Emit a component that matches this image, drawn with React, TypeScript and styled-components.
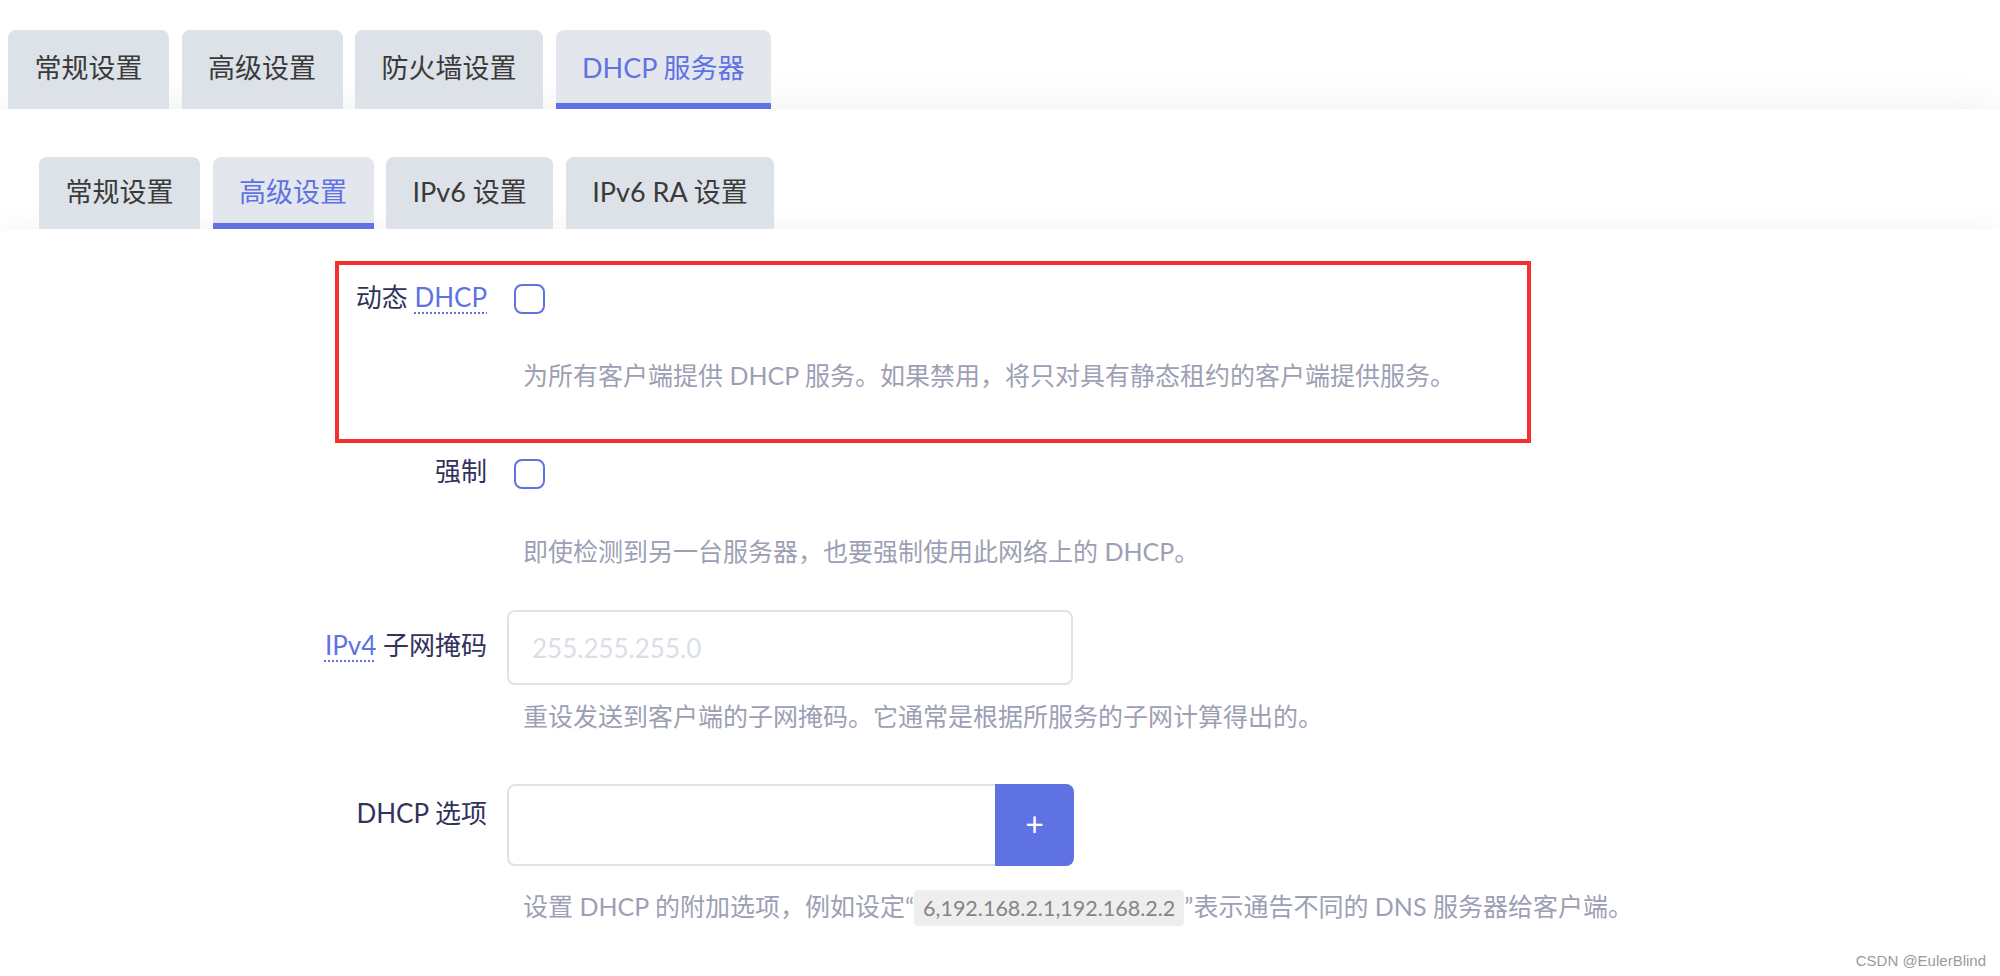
import React from "react";
import styled, { createGlobalStyle, css } from "styled-components";

const GlobalStyle = createGlobalStyle`
  html, body {
    margin: 0;
    padding: 0;
    background: #fff;
    overflow: hidden;
  }
  body {
    font-family: "Lato", "Noto Sans CJK SC", sans-serif;
  }
`;

const Page = styled.div`
  position: relative;
  width: 2000px;
  height: 976px;
  overflow: hidden;
  background: #fff;
`;

const TabBar = styled.ul<{ $top: number; $left: number }>`
  position: relative;
  z-index: 1;
  display: flex;
  gap: 12.5px;
  margin: 0;
  padding: ${(p) => p.$top}px 0 0 ${(p) => p.$left}px;
  list-style: none;
`;

const Tab = styled.li<{ $active?: boolean; $height: number }>`
  box-sizing: border-box;
  display: flex;
  align-items: center;
  height: ${(p) => p.$height}px;
  padding: 0 26.5px;
  border-radius: 8px 8px 0 0;
  border-bottom: 6px solid ${(p) => (p.$active ? "#5e72e4" : "transparent")};
  background: ${(p) => (p.$active ? "#e3e7ed" : "#dde2e8")};
  color: ${(p) => (p.$active ? "#5e72e4" : "#3a3a3a")};
  font-size: 27px;
  white-space: nowrap;
`;

// outer panel under the first tab strip, its shadow makes the grey fade above
const OuterCard = styled.section`
  background: #fff;
  box-shadow: 0 0 40px rgba(0, 0, 0, 0.07);
  min-height: 867px;
`;

const InnerCard = styled.div`
  background: #fff;
  border-radius: 8px 0 0 0;
  box-shadow: 0 0 30px rgba(0, 0, 0, 0.06);
  padding: 55px 0 60px;
  min-height: 700px;
`;

const Row = styled.div<{ $after: number; $highlight?: boolean }>`
  position: relative;
  display: grid;
  grid-template-columns: 487px 1fr;
  column-gap: 20px;
  margin-bottom: ${(p) => p.$after}px;

  ${(p) =>
    p.$highlight &&
    css`
      &::before {
        content: "";
        position: absolute;
        left: 335px;
        top: -23px;
        width: 1196px;
        height: 182px;
        box-sizing: border-box;
        border: 4px solid #f3302b;
        pointer-events: none;
      }
    `}
`;

const Label = styled.label<{ $offset: number }>`
  margin-top: ${(p) => p.$offset}px;
  text-align: right;
  font-size: 26px;
  line-height: 26px;
  color: #32325d;
  white-space: nowrap;
`;

const Abbr = styled.abbr`
  color: #5e72e4;
  text-decoration: underline dotted #5e72e4;
  text-decoration-thickness: 2px;
  text-underline-offset: 5px;
  cursor: help;
`;

const Field = styled.div`
  display: flex;
  flex-direction: column;
  align-items: flex-start;
`;

const Checkbox = styled.input.attrs({ type: "checkbox" })`
  appearance: none;
  display: block;
  box-sizing: border-box;
  width: 31px;
  height: 30px;
  margin: 0 0 0 7px;
  border: 2px solid #5e72e4;
  border-radius: 8px;
  background: #fff;
`;

const TextInput = styled.input`
  box-sizing: border-box;
  width: 566px;
  height: 75px;
  padding: 0 23px;
  border: 2px solid #dfe3e9;
  border-radius: 8px;
  outline: none;
  font-family: "Lato", "Noto Sans CJK SC", sans-serif;
  font-size: 26px;
  color: #32325d;

  &::placeholder {
    color: #dbdee6;
  }
`;

const InputGroup = styled.div`
  display: flex;
  width: 567px;
  height: 82px;
`;

const GroupInput = styled.input`
  flex: 1;
  box-sizing: border-box;
  min-width: 0;
  border: 2px solid #dfe3e9;
  border-right: none;
  border-radius: 8px 0 0 8px;
  outline: none;
  padding: 0 23px;
  font-family: "Lato", "Noto Sans CJK SC", sans-serif;
  font-size: 26px;
`;

const AddButton = styled.button`
  width: 79px;
  border: none;
  border-radius: 0 8px 8px 0;
  background: #5e72e4;
  color: #fff;
  font-family: "Lato", sans-serif;
  font-size: 32px;
  line-height: 1;
  padding: 0 0 3px;
  cursor: pointer;
`;

const Help = styled.div<{ $top: number }>`
  margin-top: ${(p) => p.$top}px;
  padding-left: 16px;
  font-size: 25px;
  line-height: 30px;
  color: #9d9fb4;
  white-space: nowrap;
`;

const Code = styled.code`
  padding: 5px 9px;
  border-radius: 4px;
  background: #eeeeee;
  color: #858585;
  font-family: "Lato", "Noto Sans CJK SC", sans-serif;
  font-size: 21.5px;
`;

const Watermark = styled.div`
  position: absolute;
  right: 14px;
  top: 952px;
  font-family: "Liberation Sans", Arial, sans-serif;
  font-size: 15px;
  line-height: 18px;
  color: #9a9a9a;
`;

const topTabs = ["常规设置", "高级设置", "防火墙设置", "DHCP 服务器"];
const subTabs = ["常规设置", "高级设置", "IPv6 设置", "IPv6 RA 设置"];

export default function App() {
  return (
    <Page>
      <GlobalStyle />
      <TabBar $top={30} $left={8}>
        {topTabs.map((t, i) => (
          <Tab key={t} $height={79} $active={i === 3}>
            {t}
          </Tab>
        ))}
      </TabBar>
      <OuterCard>
        <TabBar $top={48} $left={39}>
          {subTabs.map((t, i) => (
            <Tab key={t} $height={72} $active={i === 1}>
              {t}
            </Tab>
          ))}
        </TabBar>
        <InnerCard>
          <Row $after={69} $highlight>
            <Label $offset={0}>
              动态 <Abbr title="动态主机配置协议">DHCP</Abbr>
            </Label>
            <Field>
              <Checkbox />
              <Help $top={46}>
                为所有客户端提供 DHCP 服务。如果禁用，将只对具有静态租约的客户端提供服务。
              </Help>
            </Field>
          </Row>

          <Row $after={44}>
            <Label $offset={-1}>强制</Label>
            <Field>
              <Checkbox />
              <Help $top={47}>即使检测到另一台服务器，也要强制使用此网络上的 DHCP。</Help>
            </Field>
          </Row>

          <Row $after={53}>
            <Label $offset={22}>
              <Abbr title="互联网协议第 4 版">IPv4</Abbr> 子网掩码
            </Label>
            <Field>
              <TextInput placeholder="255.255.255.0" />
              <Help $top={16}>重设发送到客户端的子网掩码。它通常是根据所服务的子网计算得出的。</Help>
            </Field>
          </Row>

          <Row $after={0}>
            <Label $offset={16}>DHCP 选项</Label>
            <Field>
              <InputGroup>
                <GroupInput />
                <AddButton type="button">+</AddButton>
              </InputGroup>
              <Help $top={25}>
                设置 DHCP 的附加选项，例如设定“<Code>6,192.168.2.1,192.168.2.2</Code>”表示通告不同的 DNS 服务器给客户端。
              </Help>
            </Field>
          </Row>
        </InnerCard>
      </OuterCard>
      <Watermark>CSDN @EulerBlind</Watermark>
    </Page>
  );
}
